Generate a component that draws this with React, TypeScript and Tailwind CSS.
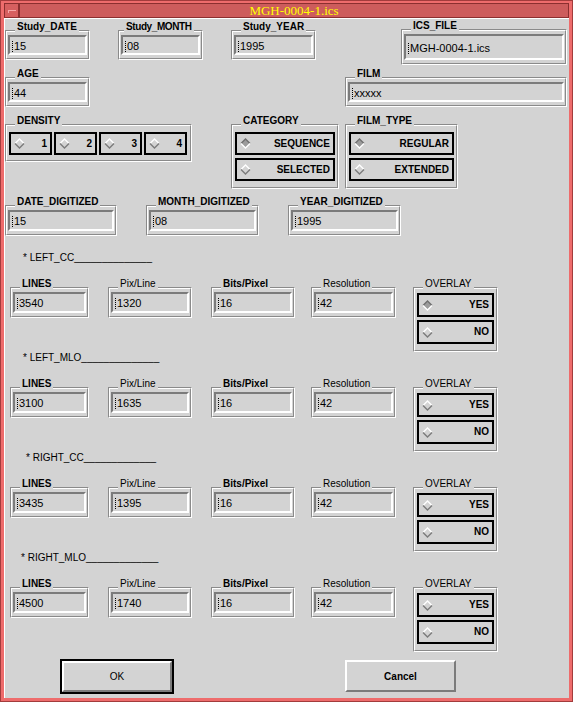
import type { ReactNode } from 'react'

const SECTIONS = [
  { name: 'LEFT_CC', bar: 14, ml: 'ml-[18px]', lines: '3540', pix: '1320', bits: '16', res: '42', yes: true, mt: 'mt-[18px]' },
  { name: 'LEFT_MLO', bar: 14, ml: 'ml-[18px]', lines: '3100', pix: '1635', bits: '16', res: '42', yes: false, mt: 'mt-[2px]' },
  { name: 'RIGHT_CC', bar: 13, ml: 'ml-[21px]', lines: '3435', pix: '1395', bits: '16', res: '42', yes: false, mt: 'mt-[2px]' },
  { name: 'RIGHT_MLO', bar: 13, ml: 'ml-[16px]', lines: '4500', pix: '1740', bits: '16', res: '42', yes: false, mt: 'mt-[2px]' },
]

function Diamond({ on }: { on?: boolean }) {
  return (
    <svg width="11" height="11" viewBox="0 0 11 11" className="shrink-0">
      <polygon points="5.5,1 10,5.5 5.5,10 1,5.5" fill={on ? '#9c9c9c' : '#d3d3d3'} />
      <polyline points="1,5.5 5.5,1 10,5.5" fill="none" stroke={on ? '#6f6f6f' : '#ffffff'} strokeWidth="1.4" />
      <polyline points="1,5.5 5.5,10 10,5.5" fill="none" stroke={on ? '#ffffff' : '#7b7b7b'} strokeWidth="1.4" />
    </svg>
  )
}

// Motif style etched-in frame with a title sitting on its top edge
function Frame({
  className = '',
  inner = 'pt-[3px] pb-[3px] px-[1px]',
  label,
  labelClass = 'font-bold',
  children,
}: {
  className?: string
  inner?: string
  label?: string
  labelClass?: string
  children?: ReactNode
}) {
  return (
    <div className={`relative shrink-0 border border-t-[#8a8a8a] border-l-[#8a8a8a] border-r-white border-b-white ${className}`}>
      <div className={`h-full border border-t-white border-l-white border-r-[#8a8a8a] border-b-[#8a8a8a] ${inner}`}>
        {children}
      </div>
      {label && (
        <span className={`absolute top-[-9px] left-[9px] h-[11px] px-[2px] bg-[#d3d3d3] text-[10px] leading-[10px] whitespace-nowrap text-black ${labelClass}`}>
          {label}
        </span>
      )}
    </div>
  )
}

function TextBox({ value, h = 'h-[21px]' }: { value: string; h?: string }) {
  return (
    <div className={`${h} flex items-center pt-[2px] pl-[2px] border-2 border-t-[#7b7b7b] border-l-[#7b7b7b] border-r-white border-b-white text-[11px] leading-none text-black`}>
      <span className="mr-[1px] h-[11px] w-0 border-l border-dotted border-black" />
      <span>{value}</span>
    </div>
  )
}

function Toggle({ label, on, className = '' }: { label: string; on?: boolean; className?: string }) {
  return (
    <div className={`flex items-center justify-between border-2 border-black pl-[3px] pr-[3px] text-[10px] font-bold leading-none text-black ${className}`}>
      <Diamond on={on} />
      <span>{label}</span>
    </div>
  )
}

export default function App() {
  return (
    <div className="w-[573px] h-[702px] bg-[#ee6c6c] border border-[#a33c3c] pt-[2px] px-[3px] pb-[3px] flex flex-col font-['Liberation_Sans',Arial,sans-serif]">
      {/* title bar */}
      <div className="flex h-[15px] shrink-0">
        <div className="w-[15px] border border-[#8b2f2f] bg-[#d65f5f] flex items-center justify-center">
          <div className="mt-[1px] w-[8px] h-[3px] border-t border-l border-[#f5a8a8]" />
        </div>
        <div className="flex-1 border border-[#8b2f2f] bg-[#cd5c5c] flex items-center justify-center font-['Liberation_Serif',serif] text-[13px] leading-none text-[#ffff00]">
          MGH-0004-1.ics
        </div>
      </div>

      {/* dialog body */}
      <div className="h-[680px] shrink-0 bg-[#d3d3d3] flex flex-col border-t border-l border-white">
        {/* row 1 */}
        <div className="mt-[10px] h-[36px] flex items-start">
          <Frame className="mt-[1px] w-[85px]" label="Study_DATE">
            <TextBox value="15" h="h-[20px]" />
          </Frame>
          <Frame className="ml-[28px] mt-[1px] w-[85px]" label="Study_MONTH" labelClass="font-bold !left-[5px] tracking-[-0.4px]">
            <TextBox value="08" h="h-[20px]" />
          </Frame>
          <Frame className="ml-[28px] mt-[1px] w-[85px]" label="Study_YEAR">
            <TextBox value="1995" h="h-[20px]" />
          </Frame>
          <Frame className="ml-[85px] w-[166px]" label="ICS_FILE">
            <TextBox value="MGH-0004-1.ics" h="h-[26px]" />
          </Frame>
        </div>

        {/* row 2 */}
        <div className="mt-[12px] h-[30px] flex items-start">
          <Frame className="w-[85px]" label="AGE">
            <TextBox value="44" h="h-[20px]" />
          </Frame>
          <Frame className="ml-[255px] w-[222px]" label="FILM">
            <TextBox value="xxxxx" h="h-[20px]" />
          </Frame>
        </div>

        {/* row 3 */}
        <div className="mt-[17px] h-[65px] flex items-start">
          <Frame className="w-[187px] h-[38px]" inner="pt-[6px] px-[2px] flex gap-[2px]" label="DENSITY">
            {['1', '2', '3', '4'].map((n) => (
              <Toggle key={n} label={n} className="w-[43px] h-[23px]" />
            ))}
          </Frame>
          <Frame className="ml-[39px] w-[108px] h-[65px]" inner="pt-[6px] px-[2px] flex flex-col gap-[3px]" label="CATEGORY">
            <Toggle label="SEQUENCE" on className="h-[23px]" />
            <Toggle label="SELECTED" className="h-[23px]" />
          </Frame>
          <Frame className="ml-[6px] w-[113px] h-[65px]" inner="pt-[6px] px-[2px] flex flex-col gap-[3px]" label="FILM_TYPE">
            <Toggle label="REGULAR" on className="h-[23px]" />
            <Toggle label="EXTENDED" className="h-[23px]" />
          </Frame>
        </div>

        {/* row 4 */}
        <div className="mt-[16px] h-[31px] flex items-start">
          <Frame className="w-[112px]" label="DATE_DIGITIZED">
            <TextBox value="15" />
          </Frame>
          <Frame className="ml-[29px] w-[113px]" label="MONTH_DIGITIZED">
            <TextBox value="08" />
          </Frame>
          <Frame className="ml-[29px] w-[113px]" label="YEAR_DIGITIZED">
            <TextBox value="1995" />
          </Frame>
        </div>

        {/* view sections */}
        {SECTIONS.map((s) => (
          <div key={s.name} className={`${s.mt} flex flex-col`}>
            <div className={`${s.ml} h-[8px] text-[10px] leading-[8px] whitespace-nowrap text-black`}>
              {'* ' + s.name}
              {'_'.repeat(s.bar)}
            </div>
            <div className="mt-[25px] h-[65px] flex items-start">
              <Frame className="ml-[5px] w-[79px]" label="LINES">
                <TextBox value={s.lines} />
              </Frame>
              <Frame className="ml-[19px] w-[84px]" label="Pix/Line" labelClass="">
                <TextBox value={s.pix} />
              </Frame>
              <Frame className="ml-[19px] w-[84px]" label="Bits/Pixel">
                <TextBox value={s.bits} />
              </Frame>
              <Frame className="ml-[16px] w-[85px]" label="Resolution" labelClass="">
                <TextBox value={s.res} />
              </Frame>
              <Frame className="ml-[17px] w-[85px] h-[65px]" inner="pt-[4px] px-[2px] flex flex-col gap-[3px]" label="OVERLAY" labelClass="">
                <Toggle label="YES" on={s.yes} className="h-[24px]" />
                <Toggle label="NO" className="h-[24px]" />
              </Frame>
            </div>
          </div>
        ))}

        {/* buttons */}
        <div className="mt-[7px] flex items-start">
          <div className="ml-[55px] w-[114px] h-[35px] border-2 border-black">
            <div className="h-full border-2 border-t-white border-l-white border-r-[#7b7b7b] border-b-[#7b7b7b] flex items-center justify-center text-[10px] text-black">
              OK
            </div>
          </div>
          <div className="ml-[171px] mt-[1px] w-[111px] h-[32px] border-2 border-t-white border-l-white border-r-[#7b7b7b] border-b-[#7b7b7b] flex items-center justify-center text-[10px] font-bold text-black">
            Cancel
          </div>
        </div>
      </div>
    </div>
  )
}
